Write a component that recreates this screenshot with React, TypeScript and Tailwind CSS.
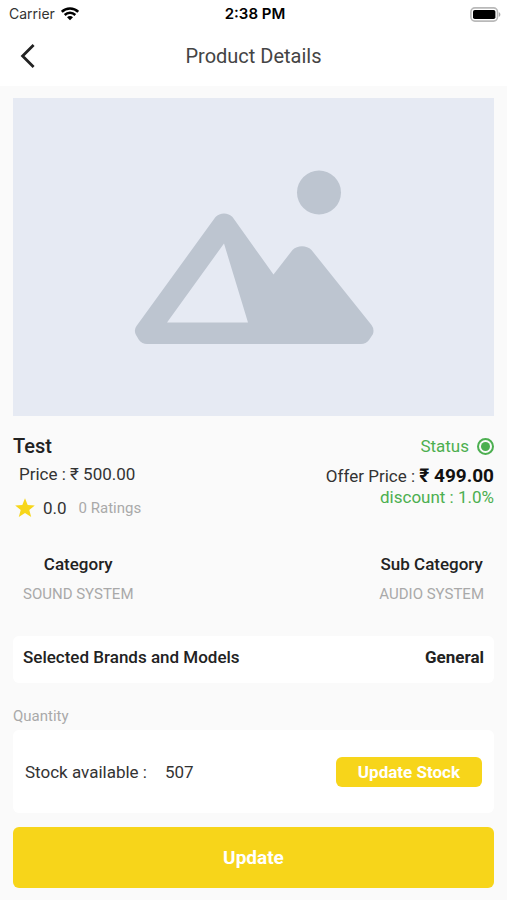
import { useState } from 'react';
import type { ReactNode } from 'react';

const product = {
    name: 'Test',
    price: '500.00',
    offerPrice: '499.00',
    discount: '1.0%',
    rating: '0.0',
    ratings: 0,
    category: 'SOUND SYSTEM',
    subCategory: 'AUDIO SYSTEM',
    brands: 'General',
    stock: 507,
};

const WifiIcon = () => (
    <svg viewBox="0 0 18 14" className="h-[14px] w-[18px]" aria-hidden="true">
        <g fill="none" stroke="#000" strokeWidth="2.5">
            <path d="M0.8 4.8 C5.2 0.4 12.8 0.4 17.2 4.8" />
            <path d="M3.7 8 C6.7 5.1 11.3 5.1 14.3 8" />
        </g>
        <path d="M6 10.3 C7.7 8.7 10.3 8.7 12 10.3 L9 13.3 Z" />
    </svg>
);

const BatteryIcon = () => (
    <svg viewBox="0 0 31 15" className="h-[15px] w-[31px]" aria-hidden="true">
        <rect x="0.9" y="0.9" width="26.6" height="13.2" rx="4" fill="#fff" stroke="#b9b9b9" strokeWidth="1.6" />
        <rect x="3" y="3" width="22.4" height="9" rx="1.8" />
        <path d="M28.8 5.2 C30.9 5.9 30.9 9.1 28.8 9.8 Z" fill="#aaa" />
    </svg>
);

const BackIcon = () => (
    <svg viewBox="0 0 16 26" className="h-[26px] w-4 fill-none stroke-[#222]" aria-hidden="true">
        <path d="M13.6 2 L2.6 13 L13.6 24" strokeWidth="2.8" />
    </svg>
);

const StarIcon = () => (
    <svg viewBox="0 0 20 20" className="h-5 w-5 fill-[#f7d61a]" aria-hidden="true">
        <path d="M10 0.3 L12.7 7 L19.8 7.4 L14.3 11.9 L16.2 19 L10 15.1 L3.8 19 L5.7 11.9 L0.2 7.4 L7.3 7 Z" />
    </svg>
);

const PlaceholderImage = () => (
    <svg viewBox="0 0 481 318" className="block w-full bg-[#e6eaf3]" role="img" aria-label="No product image">
        <circle cx="306" cy="94.5" r="22" fill="#bdc5d0" />
        <path
            fill="#bdc5d0"
            fillRule="evenodd"
            d="M202.5 119 Q206 115.5 211 115.5 Q216 115.5 219.5 119 L260.5 176.5 L279.5 152 Q283.5 148.300 289 148.300 Q294.5 148.300 298.5 152 L358.5 227 Q361.5 231 360 236 L356 242 Q353 246 348 246 L134 246 Q129 246 126 242 L123 237 Q120.5 232 123.5 228 Z M211 145.5 L154 224.5 L235 224.5 Z"
        />
    </svg>
);

const CategoryBlock = ({ title, value }: { title: string; value: string }) => (
    <div className="text-center">
        <h3 className="text-[17px] leading-6 font-medium text-[#222]">{title}</h3>
        <p className="mt-1.5 text-[15px] leading-6 text-[#a9a9a9]">{value}</p>
    </div>
);

const Card = ({ className, children }: { className: string; children: ReactNode }) => (
    <div className={`flex justify-between rounded-md bg-white ${className}`}>{children}</div>
);

export default function App() {
    const [stock] = useState(product.stock);

    return (
        <div className="min-h-screen bg-[#fafafa] font-['Roboto',sans-serif] text-[#333]">
            <header className="bg-white pb-0.5">
                <div className="grid h-7 grid-cols-3 items-center pr-1.5 pl-[9px] font-['Inter',sans-serif]">
                    <div className="flex items-center gap-1.5">
                        <span className="text-sm text-[#333]">Carrier</span>
                        <WifiIcon />
                    </div>
                    <time className="text-center text-[15px] font-semibold text-black">2:38 PM</time>
                    <div className="flex justify-end">
                        <BatteryIcon />
                    </div>
                </div>
                <div className="grid h-14 grid-cols-[40px_1fr_40px] items-center px-5">
                    <button type="button" aria-label="Back" className="w-10">
                        <BackIcon />
                    </button>
                    <h1 className="text-center text-xl text-[#444]">Product Details</h1>
                </div>
            </header>

            <main className="px-[13px] py-3">
                <PlaceholderImage />

                <section className="mt-4 flex items-start justify-between">
                    <div>
                        <h2 className="text-xl leading-7 font-medium text-[#222]">{product.name}</h2>
                        <p className="pl-1.5 text-[17px] leading-7">Price : ₹ {product.price}</p>
                        <div className="mt-1.5 flex items-center pl-0.5 leading-7">
                            <StarIcon />
                            <span className="ml-2 text-[17px]">{product.rating}</span>
                            <span className="ml-3 text-[15px] text-[#a9a9a9]">{product.ratings} Ratings</span>
                        </div>
                    </div>
                    <div className="text-right">
                        <label className="flex items-center justify-end gap-2 text-[17px] leading-7 text-[#4caf50]">
                            Status
                            <input
                                type="radio"
                                name="status"
                                defaultChecked
                                className="h-[17px] w-[17px] appearance-none rounded-full border-2 border-[#4caf50] bg-[#4caf50] bg-clip-content p-0.5"
                            />
                        </label>
                        <p className="mt-1 text-[17px] leading-6">
                            Offer Price : <strong className="text-[19px] font-bold text-[#111]">₹ {product.offerPrice}</strong>
                        </p>
                        <p className="text-[17px] leading-[18px] text-[#4caf50]">discount : {product.discount}</p>
                    </div>
                </section>

                <section className="mt-[30px] flex justify-between px-2.5">
                    <CategoryBlock title="Category" value={product.category} />
                    <CategoryBlock title="Sub Category" value={product.subCategory} />
                </section>

                <section className="mt-[30px]">
                    <Card className="px-2.5 pt-[9px] pb-3.5 text-[17px] leading-6 font-medium text-[#222]">
                        <span>Selected Brands and Models</span>
                        <span className="font-bold">{product.brands}</span>
                    </Card>
                </section>

                <section className="mt-[23px]">
                    <h3 className="text-[15px] leading-5 text-[#a9a9a9]">Quantity</h3>
                    <Card className="mt-1 items-center px-3 pt-[27px] pb-[26px] text-[17px] leading-6">
                        <p className="flex gap-[18px]">
                            <span>Stock available :</span>
                            <span>{stock}</span>
                        </p>
                        <button type="button" className="rounded-md bg-[#f7d51a] px-[22px] py-[3px] font-bold text-white">
                            Update Stock
                        </button>
                    </Card>
                </section>

                <button type="button" className="mt-3.5 w-full rounded-md bg-[#f7d51a] py-4 text-[19px] leading-[29px] font-bold text-white">
                    Update
                </button>
            </main>
        </div>
    );
}
